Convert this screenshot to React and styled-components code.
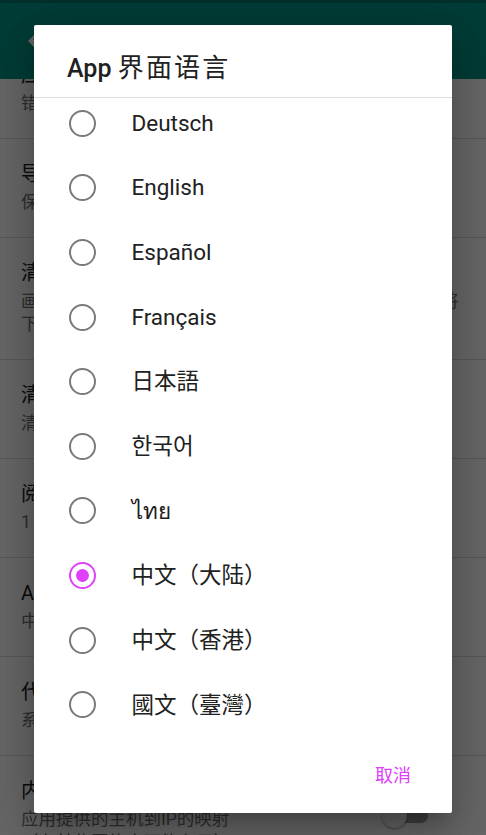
import React from "react";
import styled, { createGlobalStyle } from "styled-components";

const GlobalStyle = createGlobalStyle`
  html, body {
    margin: 0;
    padding: 0;
    width: 486px;
    height: 835px;
    overflow: hidden;
    background: #ffffff;
    font-family: Roboto, "Noto Sans CJK SC", "Noto Sans", sans-serif;
  }
  * { box-sizing: border-box; }
`;

const Page = styled.div`
  position: relative;
  width: 486px;
  height: 835px;
  overflow: hidden;
  display: flex;
  flex-direction: column;
  background: #ffffff;
`;

const StatusBar = styled.div`
  height: 3px;
  flex: none;
  background: #00796b;
`;

const AppBar = styled.div`
  height: 76px;
  flex: none;
  display: flex;
  align-items: center;
  gap: 38px;
  padding-left: 23px;
  background: #009688;
  color: #ffffff;
  position: relative;
  z-index: 1;
`;

const AppBarTitle = styled.div`
  font-size: 25px;
  font-weight: 500;
`;

const SettingsList = styled.div`
  flex: 1;
  overflow: hidden;
`;

const SettingsInner = styled.div`
  margin-top: -39.5px;
`;

const SettingItem = styled.div`
  display: flex;
  align-items: center;
  padding: 22px 20px 23px 21px;
  border-bottom: 1px solid #dcdcdc;
`;

const SettingText = styled.div`
  flex: 1;
  min-width: 0;
  display: flex;
  flex-direction: column;
  gap: 4px;
`;

const SettingTitle = styled.div`
  font-size: 20px;
  line-height: 26px;
  color: #212121;
`;

const SettingSummary = styled.div`
  font-size: 17.5px;
  line-height: 23px;
  color: #757575;
  white-space: pre-line;
`;

const SwitchTrack = styled.div`
  position: relative;
  flex: none;
  width: 38px;
  height: 14px;
  margin-right: 38px;
  border-radius: 7px;
  background: #9e9e9e;
`;

const SwitchThumb = styled.div`
  position: absolute;
  left: -8px;
  top: -5.5px;
  width: 25px;
  height: 25px;
  border-radius: 50%;
  background: #fafafa;
  box-shadow: 0 1px 3px rgba(0, 0, 0, 0.4);
`;

const Scrim = styled.div`
  position: absolute;
  inset: 0;
  z-index: 2;
  background: rgba(0, 0, 0, 0.6);
`;

const Dialog = styled.div`
  position: absolute;
  z-index: 3;
  left: 34px;
  top: 25px;
  width: 418px;
  height: 788px;
  display: flex;
  flex-direction: column;
  background: #ffffff;
  border-radius: 2px;
  box-shadow: 0 11px 15px -7px rgba(0, 0, 0, 0.2),
    0 24px 38px 3px rgba(0, 0, 0, 0.14), 0 9px 46px 8px rgba(0, 0, 0, 0.12);
  overflow: hidden;
`;

const DialogTitle = styled.div`
  flex: none;
  height: 73px;
  padding: 31px 33px 0;
  font-size: 25px;
  line-height: 25px;
  font-weight: 500;
  color: #212121;
  border-bottom: 1px solid #dedede;
  white-space: nowrap;
`;

const TitleCjk = styled.span`
  font-size: 26px;
  font-weight: 400;
  letter-spacing: 2.2px;
`;

const OptionList = styled.div`
  flex: none;
  height: 640px;
  overflow: hidden;
`;

const OptionInner = styled.div`
  margin-top: -7.3px;
`;

const OptionRow = styled.div`
  height: 64.67px;
  display: flex;
  align-items: center;
  gap: 36px;
  padding-left: 34.5px;
`;

const Radio = styled.div`
  flex: none;
  width: 27px;
  height: 27px;
  border-radius: 50%;
  border: 2.6px solid ${(p) => (p.$checked ? "#e040fb" : "#7a7a7a")};
  display: flex;
  align-items: center;
  justify-content: center;
`;

const RadioDot = styled.div`
  width: 13px;
  height: 13px;
  border-radius: 50%;
  background: #e040fb;
`;

const OptionLabel = styled.div`
  font-size: 22.5px;
  line-height: 1;
  color: #212121;
  font-family: Roboto, ${(p) => p.$cjk}, sans-serif;
`;

const DialogFooter = styled.div`
  flex: 1;
  display: flex;
  justify-content: flex-end;
  align-items: flex-start;
  padding: 29px 41px 0 0;
`;

const TextButton = styled.div`
  font-size: 18px;
  line-height: 18px;
  color: #e040fb;
`;

const BackArrow = () => (
  <svg width="30" height="30" viewBox="0 0 24 24" fill="#ffffff">
    <path d="M20 11H7.83l5.59-5.59L12 4l-8 8 8 8 1.41-1.41L7.83 13H20v-2z" />
  </svg>
);

const settings = [
  { title: "应用崩溃日志", summary: "错误报告会保存在本地" },
  { title: "导出设置", summary: "保存当前的设置到文件" },
  {
    title: "清除缓存",
    summary:
      "画廊缓存的图片会占用存储空间，清除之后再次浏览时将下载图片并消耗较多的网络流量",
  },
  { title: "清除历史记录", summary: "清除所有的浏览记录" },
  { title: "阅读模式", summary: "1 页" },
  { title: "App 界面语言", summary: "中文（大陆）" },
  { title: "代理设置", summary: "系统代理" },
];

const languages = [
  { label: "Deutsch", lang: "de", cjk: '"Noto Sans CJK SC"' },
  { label: "English", lang: "en", cjk: '"Noto Sans CJK SC"' },
  { label: "Español", lang: "es", cjk: '"Noto Sans CJK SC"' },
  { label: "Français", lang: "fr", cjk: '"Noto Sans CJK SC"' },
  { label: "日本語", lang: "ja", cjk: '"Noto Sans CJK JP"' },
  { label: "한국어", lang: "ko", cjk: '"Noto Sans CJK KR"' },
  { label: "ไทย", lang: "th", cjk: '"Noto Sans", "DejaVu Sans"' },
  { label: "中文（大陆）", lang: "zh-CN", cjk: '"Noto Sans CJK SC"', checked: true },
  { label: "中文（香港）", lang: "zh-HK", cjk: '"Noto Sans CJK TC"' },
  { label: "國文（臺灣）", lang: "zh-TW", cjk: '"Noto Sans CJK TC"' },
];

export default function App() {
  return (
    <>
      <GlobalStyle />
      <Page>
        <StatusBar />
        <AppBar>
          <BackArrow />
          <AppBarTitle>设置</AppBarTitle>
        </AppBar>
        <SettingsList>
          <SettingsInner>
            {settings.map((s) => (
              <SettingItem key={s.title}>
                <SettingText>
                  <SettingTitle>{s.title}</SettingTitle>
                  <SettingSummary>{s.summary}</SettingSummary>
                </SettingText>
              </SettingItem>
            ))}
            <SettingItem>
              <SettingText>
                <SettingTitle>内置 hosts</SettingTitle>
                <SettingSummary>
                  {"应用提供的主机到IP的映射\n（在某些网络中可能有用）"}
                </SettingSummary>
              </SettingText>
              <SwitchTrack>
                <SwitchThumb />
              </SwitchTrack>
            </SettingItem>
          </SettingsInner>
        </SettingsList>
        <Scrim />
        <Dialog>
          <DialogTitle>
            App <TitleCjk>界面语言</TitleCjk>
          </DialogTitle>
          <OptionList>
            <OptionInner>
              {languages.map((l) => (
                <OptionRow key={l.label}>
                  <Radio $checked={l.checked}>{l.checked && <RadioDot />}</Radio>
                  <OptionLabel lang={l.lang} $cjk={l.cjk}>
                    {l.label}
                  </OptionLabel>
                </OptionRow>
              ))}
            </OptionInner>
          </OptionList>
          <DialogFooter>
            <TextButton>取消</TextButton>
          </DialogFooter>
        </Dialog>
      </Page>
    </>
  );
}
